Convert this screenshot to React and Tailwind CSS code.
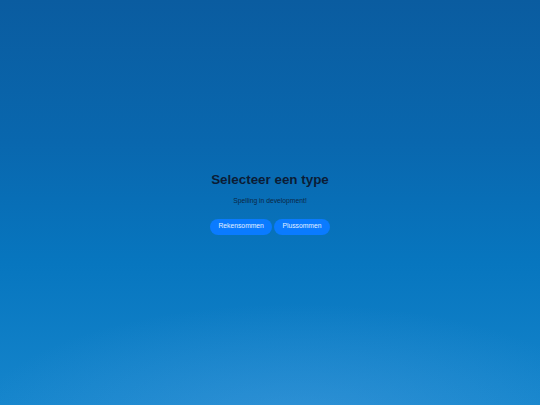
export default function App() {
  return (
    <div
      className="relative w-[540px] h-[405px] overflow-hidden flex flex-col items-center justify-center bg-[linear-gradient(180deg,#0a5ca0_0%,#0967ae_35%,#0776bf_65%,#1585cc_100%)]"
      style={{ fontFamily: '"Liberation Sans", Arial, sans-serif' }}
    >
      <div className="pointer-events-none absolute inset-0 bg-[radial-gradient(ellipse_60%_30%_at_55%_105%,rgba(80,160,225,0.45),rgba(80,160,225,0)_100%)]" />
      <div className="relative flex flex-col items-center">
        <h1 className="mt-[2px] text-[13.4px] leading-[16px] font-bold text-[#0b1c36]">Selecteer een type</h1>
        <p className="mt-[9px] text-[6.75px] leading-[8px] text-[#0c2744]">Spelling in development!</p>
        <div className="mt-[13.5px] flex gap-[2px]">
          <button className="h-[16.5px] px-[8.3px] rounded-full bg-[#0a7bff] text-[6.75px] text-[#e3f0ff] leading-none">
            Rekensommen
          </button>
          <button className="h-[16.5px] px-[8.3px] rounded-full bg-[#0a7bff] text-[6.75px] text-[#e3f0ff] leading-none">
            Plussommen
          </button>
        </div>
      </div>
    </div>
  );
}
